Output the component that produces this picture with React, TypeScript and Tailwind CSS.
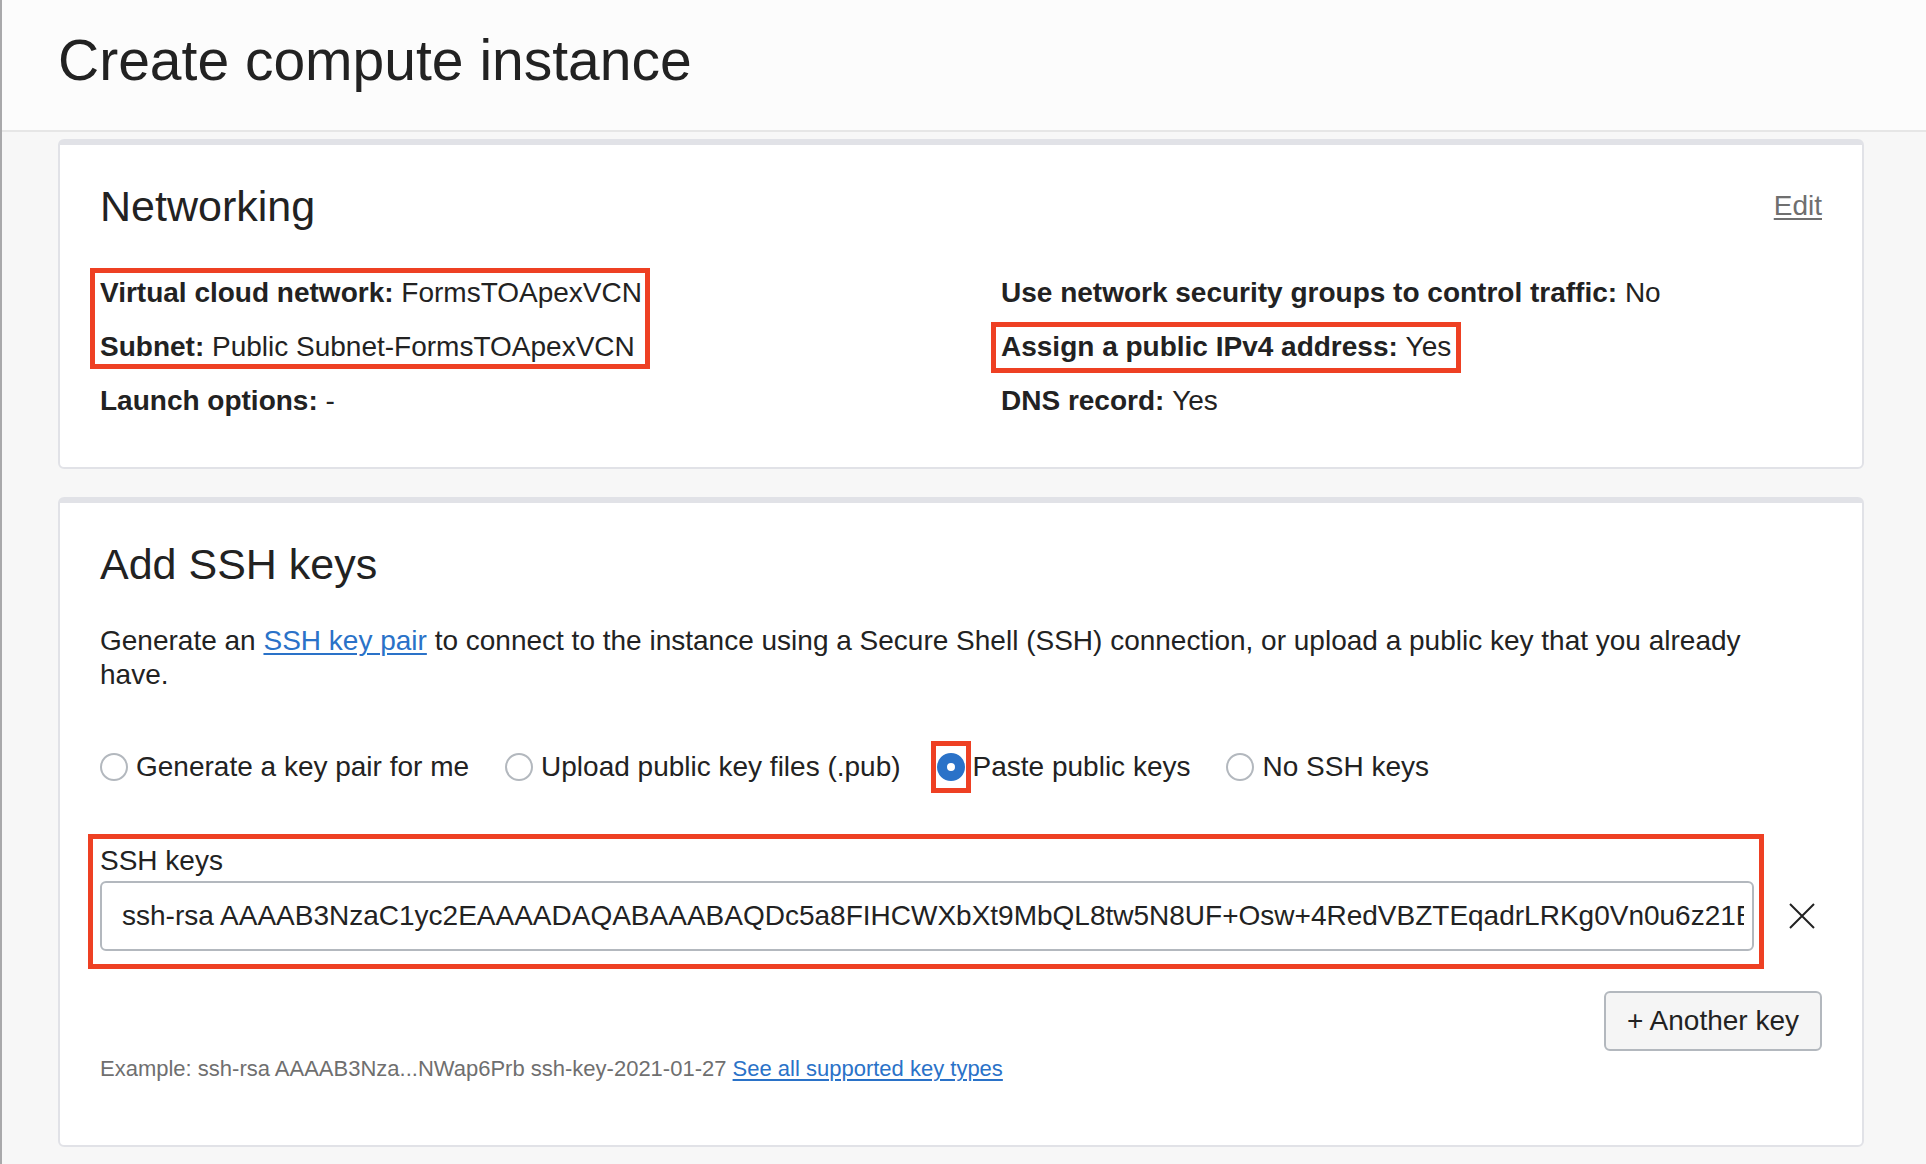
import { useState, type ReactNode } from "react";

const KEY =
  "ssh-rsa AAAAB3NzaC1yc2EAAAADAQABAAABAQDc5a8FIHCWXbXt9MbQL8tw5N8UF+Osw+4RedVBZTEqadrLRKg0Vn0u6z21E";

const KEY_OPTIONS = [
  "Generate a key pair for me",
  "Upload public key files (.pub)",
  "Paste public keys",
  "No SSH keys",
];

function Card({ children }: { children: ReactNode }) {
  return (
    <section className="rounded-md border-2 border-t-6 border-[#e1e2e7] bg-white px-10">
      {children}
    </section>
  );
}

function Highlight({ className }: { className: string }) {
  return (
    <span
      aria-hidden="true"
      className={`pointer-events-none absolute border-5 border-[#ee4023] ${className}`}
    />
  );
}

function Detail({ label, value }: { label: string; value: string }) {
  return (
    <div className="leading-[34px]">
      <dt className="inline font-bold">{label}:</dt> <dd className="inline">{value}</dd>
    </div>
  );
}

export default function App() {
  const [option, setOption] = useState(KEY_OPTIONS[2]);
  const [key, setKey] = useState(KEY);

  return (
    <div className="min-h-screen border-l-2 border-[#a9a9ab] bg-[#f7f7f7] font-['Liberation_Sans',Arial,sans-serif] text-[28px] leading-[34px] text-[#222222]">
      <header className="border-b-2 border-[#e6e6e6] bg-[#fcfcfc] px-14 pt-7 pb-[38px]">
        <h1 className="text-[57px] leading-16">Create compute instance</h1>
      </header>

      <main className="flex flex-col gap-7 pt-[7px] pr-[62px] pb-4 pl-14">
        <Card>
          <div className="flex items-center justify-between pt-[35px]">
            <h2 className="text-[43px] leading-[52px]">Networking</h2>
            <a href="#networking" className="text-[#6f6f6f] underline decoration-2 underline-offset-3">
              Edit
            </a>
          </div>
          <div className="grid grid-cols-2 gap-20 pt-11 pb-[49px]">
            <dl className="flex flex-col items-start gap-5">
              <div className="relative flex flex-col gap-5">
                <Highlight className="-top-2 -right-2 -bottom-[5px] -left-[10px]" />
                <Detail label="Virtual cloud network" value="FormsTOApexVCN" />
                <Detail label="Subnet" value="Public Subnet-FormsTOApexVCN" />
              </div>
              <Detail label="Launch options" value="-" />
            </dl>
            <dl className="flex flex-col items-start gap-5">
              <Detail label="Use network security groups to control traffic" value="No" />
              <div className="relative">
                <Highlight className="-top-2 -right-[10px] -bottom-[9px] -left-[10px]" />
                <Detail label="Assign a public IPv4 address" value="Yes" />
              </div>
              <Detail label="DNS record" value="Yes" />
            </dl>
          </div>
        </Card>

        <Card>
          <h2 className="pt-[35px] text-[43px] leading-[52px]">Add SSH keys</h2>
          <p className="pt-[34px] pr-10">
            Generate an{" "}
            <a href="#ssh-key-pair" className="text-[#2a72c8] underline decoration-2 underline-offset-3">
              SSH key pair
            </a>{" "}
            to connect to the instance using a Secure Shell (SSH) connection, or upload a public key
            that you already have.
          </p>

          <fieldset aria-label="SSH key source" className="flex flex-wrap gap-9 pt-[58px]">
            {KEY_OPTIONS.map((name) => (
              <label key={name} className="flex items-center gap-2">
                <span className="relative flex">
                  <input
                    type="radio"
                    name="key-source"
                    checked={option === name}
                    onChange={() => setOption(name)}
                    className="size-7 appearance-none rounded-full border-2 border-[#b3b8be] bg-white checked:border-10 checked:border-[#2a72c8]"
                  />
                  {name === "Paste public keys" && (
                    <Highlight className="-top-3 -right-[6px] -bottom-3 -left-[6px]" />
                  )}
                </span>
                {name}
              </label>
            ))}
          </fieldset>

          <div className="flex items-end pt-[60px]">
            <div className="relative min-w-0 flex-1">
              <Highlight className="-top-[10px] -right-[10px] -bottom-[18px] -left-3" />
              <label htmlFor="ssh-key" className="block pb-[3px]">
                SSH keys
              </label>
              <input
                id="ssh-key"
                type="text"
                value={key}
                onChange={(event) => setKey(event.target.value)}
                className="h-[70px] w-full rounded-md border-2 border-[#b3b8be] bg-white pr-2 pl-5"
              />
            </div>
            <button
              type="button"
              aria-label="Remove key"
              className="flex h-[70px] w-[68px] items-center justify-end pr-[7px]"
            >
              <svg viewBox="0 0 26 26" className="size-[26px]" fill="none" stroke="#222222" strokeWidth="2">
                <path d="M1 1 25 25M25 1 1 25" />
              </svg>
            </button>
          </div>

          <div className="flex justify-end pt-10">
            <button
              type="button"
              className="h-[60px] rounded-md border-2 border-[#b3b8be] bg-[#f5f5f5] px-[21px]"
            >
              + Another key
            </button>
          </div>
          <p className="pt-1 pb-[62px] text-[22px] leading-7 text-[#6f6f6f]">
            Example: ssh-rsa AAAAB3Nza...NWap6Prb ssh-key-2021-01-27{" "}
            <a href="#key-types" className="text-[#2a72c8] underline decoration-2 underline-offset-3">
              See all supported key types
            </a>
          </p>
        </Card>
      </main>
    </div>
  );
}
